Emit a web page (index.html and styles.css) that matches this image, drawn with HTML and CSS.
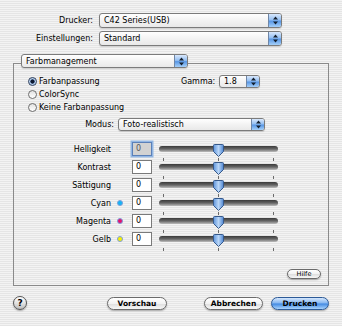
FILE: index.html
```html
<!DOCTYPE html>
<html lang="de">
<head>
  <meta charset="UTF-8">
  <title>Drucken</title>
  <link rel="stylesheet" href="styles.css">
</head>
<body>

  <!-- gemeinsame Verlaeufe fuer die Regler -->
  <svg class="defs" width="0" height="0">
    <defs>
      <linearGradient id="thumbFill" x1="0" y1="0" x2="1" y2="0">
        <stop offset="0" stop-color="#5f95dc"/>
        <stop offset="0.5" stop-color="#b9d6f7"/>
        <stop offset="1" stop-color="#4f86d2"/>
      </linearGradient>
    </defs>
  </svg>

  <div class="dialog">

    <!-- DRUCKER / EINSTELLUNGEN -->
    <div class="field-row">
      <span class="field-label">Drucker:</span>
      <div class="popup wide">
        <span class="popup-text">C42 Series(USB)</span>
        <span class="popup-arrows"><svg width="5" height="9" viewBox="0 0 5 9"><path d="M2.5 .5 L5 3.5 H0 Z M0 5.5 H5 L2.5 8.5 Z"/></svg></span>
      </div>
    </div>
    <div class="field-row">
      <span class="field-label">Einstellungen:</span>
      <div class="popup wide">
        <span class="popup-text">Standard</span>
        <span class="popup-arrows"><svg width="5" height="9" viewBox="0 0 5 9"><path d="M2.5 .5 L5 3.5 H0 Z M0 5.5 H5 L2.5 8.5 Z"/></svg></span>
      </div>
    </div>

    <!-- FARBMANAGEMENT -->
    <div class="group">
      <div class="popup tab">
        <span class="popup-text">Farbmanagement</span>
        <span class="popup-arrows"><svg width="5" height="9" viewBox="0 0 5 9"><path d="M2.5 .5 L5 3.5 H0 Z M0 5.5 H5 L2.5 8.5 Z"/></svg></span>
      </div>

      <div class="options">
        <div class="radio-row">
          <span class="radio checked"><i></i>Farbanpassung</span>
          <span class="gamma-label">Gamma:</span>
          <div class="popup gamma">
            <span class="popup-text">1.8</span>
            <span class="popup-arrows"><svg width="5" height="9" viewBox="0 0 5 9"><path d="M2.5 .5 L5 3.5 H0 Z M0 5.5 H5 L2.5 8.5 Z"/></svg></span>
          </div>
        </div>
        <div class="radio-row">
          <span class="radio"><i></i>ColorSync</span>
        </div>
        <div class="radio-row">
          <span class="radio"><i></i>Keine Farbanpassung</span>
        </div>
      </div>

      <div class="mode-row">
        <span class="mode-label">Modus:</span>
        <div class="popup mode">
          <span class="popup-text">Foto-realistisch</span>
          <span class="popup-arrows"><svg width="5" height="9" viewBox="0 0 5 9"><path d="M2.5 .5 L5 3.5 H0 Z M0 5.5 H5 L2.5 8.5 Z"/></svg></span>
        </div>
      </div>

      <div class="sliders" id="sliders"></div>

      <div class="help-row">
        <button class="btn small">Hilfe</button>
      </div>
    </div>

    <!-- AKTIONEN -->
    <div class="actions">
      <span class="help-circle">?</span>
      <button class="btn preview">Vorschau</button>
      <button class="btn cancel">Abbrechen</button>
      <button class="btn default">Drucken</button>
    </div>
  </div>

  <script>
    // Regler-Zeilen
    const regler = [
      { name: "Helligkeit", wert: 0, aktiv: true },
      { name: "Kontrast", wert: 0 },
      { name: "Sättigung", wert: 0 },
      { name: "Cyan", wert: 0, farbe: "cyan" },
      { name: "Magenta", wert: 0, farbe: "magenta" },
      { name: "Gelb", wert: 0, farbe: "yellow" }
    ];

    const container = document.getElementById('sliders');
    regler.forEach(r => {
      container.innerHTML += `
        <div class="slider-row">
          <span class="slider-label">${r.name}</span>
          <span class="swatch-slot">${r.farbe ? `<i class="swatch ${r.farbe}"></i>` : ""}</span>
          <span class="num-field${r.aktiv ? " active" : ""}">${r.wert}</span>
          <div class="slider">
            <div class="track"></div>
            <svg class="thumb" width="11" height="13" viewBox="0 0 11 13"><path d="M1.5 .5 H9.5 Q10.5 .5 10.5 1.5 V7.5 L5.5 12.5 L.5 7.5 V1.5 Q.5 .5 1.5 .5 Z"/></svg>
            <div class="ticks"><i></i><i></i><i></i></div>
          </div>
        </div>`;
    });
  </script>
</body>
</html>
```

FILE: styles.css
```css
* {
  box-sizing: border-box;
}

body {
  margin: 0;
  width: 342px;
  height: 326px;
  overflow: hidden;
  font-family: "DejaVu Sans", sans-serif;
  font-size: 8px;
  color: #000;
  background: repeating-linear-gradient(to bottom, #f3f3f3 0 1px, #e5e5e5 1px 2px);
}

.defs {
  position: absolute;
}

.dialog {
  padding-top: 13px;
}

/* Popup-Menues */
.popup {
  display: flex;
  height: 15px;
  border: 1px solid #7b7b7b;
  border-radius: 3px;
  background: linear-gradient(#ffffff, #f3f3f3 50%, #e9e9e9);
  box-shadow: 0 1px 1px rgba(0, 0, 0, 0.15);
  overflow: hidden;
}

.popup-text {
  flex: 1;
  display: flex;
  align-items: center;
  padding-left: 4px;
  white-space: nowrap;
}

.popup-arrows {
  width: 13px;
  display: flex;
  align-items: center;
  justify-content: center;
  border-left: 1px solid #6f86a6;
  background: linear-gradient(#d9e8fc, #94bff2 45%, #5896e4 55%, #a5d0fa);
}

.popup-arrows path {
  fill: #14202e;
}

.field-row {
  display: flex;
  align-items: center;
  height: 15px;
  margin-bottom: 3px;
}

.field-label {
  width: 93px;
  text-align: right;
}

.popup.wide {
  width: 183px;
  margin-left: 6px;
}

/* Gruppenrahmen */
.group {
  margin: 17px 0 0 13px;
  width: 316px;
  border: 1px solid #8a8a8a;
  padding-bottom: 6px;
}

.popup.tab {
  width: 167px;
  height: 14px;
  margin: -10px 0 0 7px;
}

.options {
  margin-top: 7px;
  padding-left: 14px;
}

.radio-row {
  display: flex;
  align-items: center;
  height: 13px;
}

.radio {
  display: flex;
  align-items: center;
  width: 153px;
}

.radio i {
  width: 9px;
  height: 9px;
  margin-right: 2px;
  border: 1px solid #6e6e6e;
  border-radius: 50%;
  background: linear-gradient(#e2e2e2, #ffffff);
}

.radio.checked i {
  border-color: #2b3d5c;
  background: radial-gradient(circle, #0d1930 0 1.8px, #9cbde6 2.4px, #e8f0fb 4px);
}

.gamma-label {
  width: 38px;
}

.popup.gamma {
  width: 41px;
  height: 13px;
}

.mode-row {
  display: flex;
  align-items: center;
  margin-top: 4px;
  height: 13px;
}

.mode-label {
  width: 100px;
  text-align: right;
}

.popup.mode {
  width: 147px;
  height: 13px;
  margin-left: 4px;
}

/* Regler */
.sliders {
  margin-top: 9px;
}

.slider-row {
  display: flex;
  align-items: center;
  height: 18px;
}

.slider-label {
  width: 97px;
  text-align: right;
}

.swatch-slot {
  width: 21px;
  display: flex;
  align-items: center;
}

.swatch {
  width: 6px;
  height: 6px;
  margin-left: 6px;
  border-radius: 50%;
  border: 1px solid #7d9fdc;
}

.swatch.cyan {
  background: #12b4f5;
}

.swatch.magenta {
  background: #e5106e;
}

.swatch.yellow {
  background: #f6f000;
}

.num-field {
  width: 20px;
  height: 14px;
  margin-right: 7px;
  padding-left: 3px;
  line-height: 12px;
  border: 1px solid #7a7a7a;
  background: #fff;
}

.num-field.active {
  background: #d2d2d2;
  color: #555;
  border-color: #5b80b8;
  box-shadow: 0 0 0 1.5px #93b7e4;
}

.slider {
  position: relative;
  width: 119px;
  height: 18px;
}

.track {
  margin-top: 6px;
  height: 6px;
  border-radius: 3px;
  background: linear-gradient(#3a3a3a, #666 50%, #bdbdbd);
}

.thumb {
  position: absolute;
  left: 54px;
  top: 4px;
}

.thumb path {
  fill: url(#thumbFill);
  stroke: #36598a;
}

.ticks {
  display: flex;
  justify-content: space-between;
  margin-top: 6px;
  padding: 0 4px;
}

.ticks i {
  width: 1px;
  height: 3px;
  background: #6a6a6a;
}

.help-row {
  display: flex;
  justify-content: flex-end;
  margin-top: 21px;
  padding-right: 7px;
}

/* Knoepfe */
.btn {
  height: 13px;
  padding: 0;
  font-family: "DejaVu Sans", sans-serif;
  font-size: 7.5px;
  font-weight: bold;
  color: #000;
  border: 1px solid #6a6a6a;
  border-radius: 7px;
  background: linear-gradient(#ffffff, #f2f2f2 50%, #dedede 52%, #f7f7f7);
  box-shadow: 0 1px 1.5px rgba(0, 0, 0, 0.3);
}

.btn.small {
  width: 34px;
  height: 10px;
  font-size: 6.5px;
  font-weight: normal;
  line-height: 8px;
  border-radius: 5px;
}

.actions {
  display: flex;
  align-items: center;
  height: 14px;
  margin-top: 10px;
  padding-left: 13px;
}

.help-circle {
  width: 14px;
  height: 14px;
  display: flex;
  align-items: center;
  justify-content: center;
  border: 1px solid #555;
  border-radius: 50%;
  font-weight: bold;
  font-size: 9px;
  background: linear-gradient(#ffffff, #e0e0e0 55%, #bcbcbc);
  box-shadow: 0 1px 1.5px rgba(0, 0, 0, 0.3);
}

.btn.preview {
  width: 60px;
  margin-left: 80px;
}

.btn.cancel {
  width: 59px;
  margin-left: 37px;
}

.btn.default {
  width: 58px;
  margin-left: 8px;
  border-color: #2c5a97;
  background: linear-gradient(#d4e6fc, #82b4f0 48%, #3f87e1 52%, #a9d3fc);
}
```
